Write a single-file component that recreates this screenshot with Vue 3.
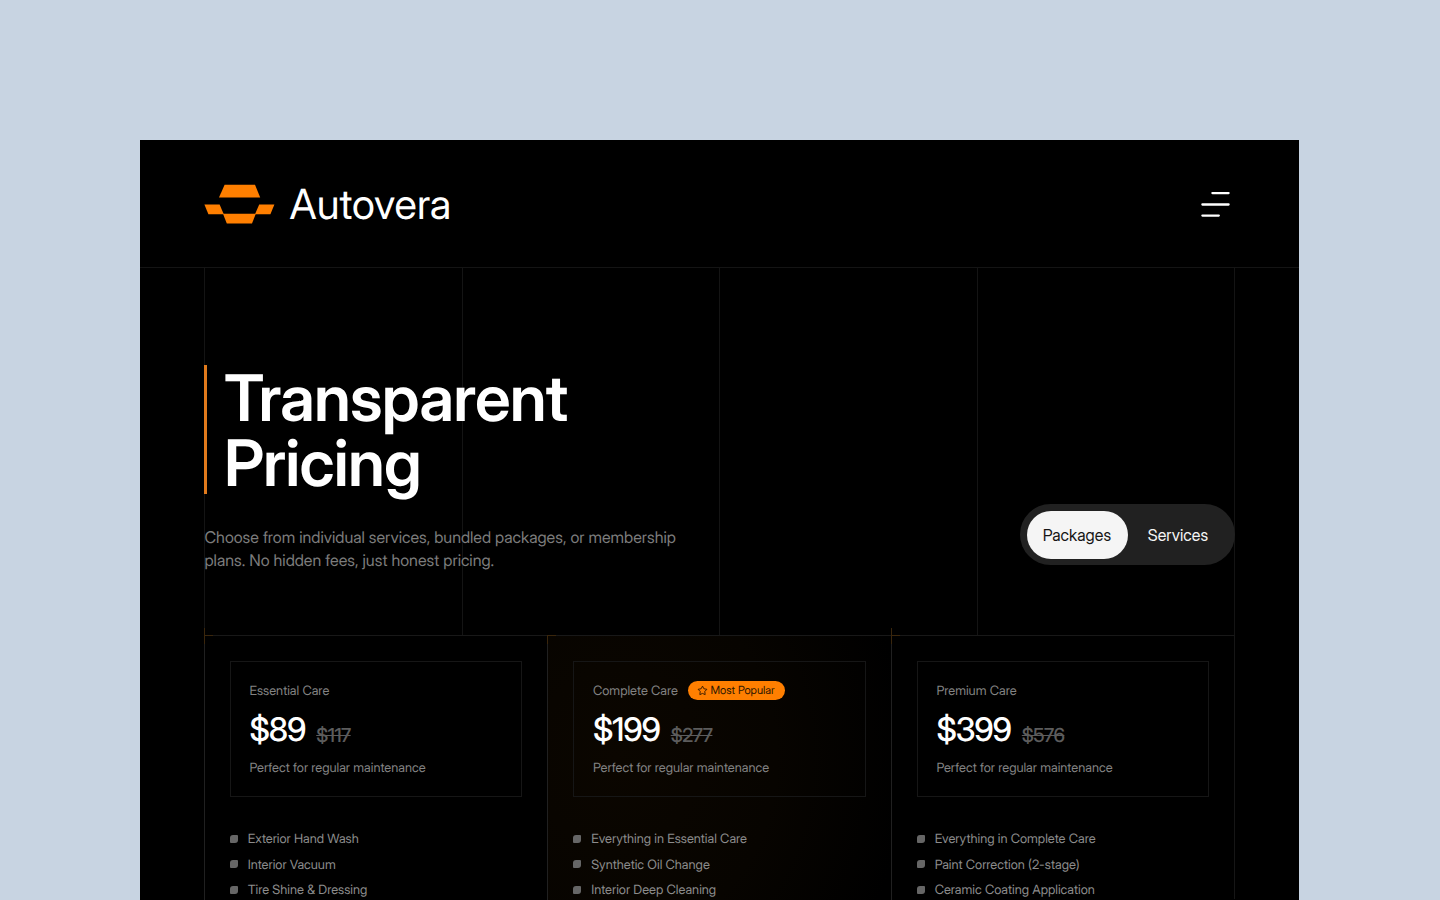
<template>
    <div class="stage">
        <main class="page">
            <header class="header">
                <a class="brand">
                    <svg class="brand__mark" viewBox="0 0 71 40" fill="#ff7f00">
                        <path d="M20.6 0.7H51L56.2 13.5H15Z" />
                        <path d="M0.4 20.4H15.6L19.8 30.2H4.4Z" />
                        <path d="M55.2 20.4H70.4L66.4 30.2H51Z" />
                        <path d="M19 29.8H51.8L48 39.6H22.8Z" />
                    </svg>
                    <span class="brand__name">Autovera</span>
                </a>
                <button class="burger" aria-label="Menu">
                    <svg viewBox="0 0 29 26" fill="none" stroke="#fff" stroke-width="2.3" stroke-linecap="round">
                        <path d="M11.4 2.1H27.6M1.4 13.5H27.6M1.4 24.6H17.8" />
                    </svg>
                </button>
            </header>

            <section class="hero">
                <div class="hero__grid">
                    <i v-for="n in 4" :key="n"></i>
                </div>
                <div class="hero__content">
                    <div>
                        <h1 class="hero__title">Transparent<br />Pricing</h1>
                        <p class="hero__text">
                            Choose from individual services, bundled packages, or membership<br />
                            plans. No hidden fees, just honest pricing.
                        </p>
                    </div>
                    <div class="toggle">
                        <button
                            v-for="tab in tabs"
                            :key="tab"
                            :class="['toggle__item', { 'toggle__item--active': tab === active }]"
                            @click="active = tab"
                        >
                            {{ tab }}
                        </button>
                    </div>
                </div>
            </section>

            <section class="plans">
                <article v-for="plan in plans" :key="plan.name" :class="['plan', { 'plan--popular': plan.popular }]">
                    <div class="plan__box">
                        <div class="plan__head">
                            <span class="plan__name">{{ plan.name }}</span>
                            <span v-if="plan.popular" class="badge">
                                <svg viewBox="0 0 12 12" fill="none" stroke="currentColor" stroke-linejoin="round">
                                    <path d="M6 1.2L7.5 4.1L10.8 4.7L8.5 7.1L8.9 10.5L6 9.2L3.1 10.5L3.5 7.1L1.2 4.7L4.5 4.1Z" />
                                </svg>
                                <span>Most Popular</span>
                            </span>
                        </div>
                        <div class="plan__price">
                            <strong>{{ plan.price }}</strong>
                            <s>{{ plan.old }}</s>
                        </div>
                        <p class="plan__note">Perfect for regular maintenance</p>
                    </div>
                    <ul class="plan__list">
                        <li v-for="item in plan.items" :key="item">{{ item }}</li>
                    </ul>
                </article>
            </section>
        </main>
    </div>
</template>

<script setup>
import { ref } from 'vue'

const tabs = ['Packages', 'Services']
const active = ref('Packages')

const plans = [
    {
        name: 'Essential Care',
        price: '$89',
        old: '$117',
        items: ['Exterior Hand Wash', 'Interior Vacuum', 'Tire Shine & Dressing']
    },
    {
        name: 'Complete Care',
        price: '$199',
        old: '$277',
        popular: true,
        items: ['Everything in Essential Care', 'Synthetic Oil Change', 'Interior Deep Cleaning']
    },
    {
        name: 'Premium Care',
        price: '$399',
        old: '$576',
        items: ['Everything in Complete Care', 'Paint Correction (2-stage)', 'Ceramic Coating Application']
    }
]
</script>

<style>
body {
    margin: 0;
    background: #c8d4e2;
}
</style>

<style scoped>
.stage {
    box-sizing: border-box;
    height: 900px;
    padding: 140px 140.6px 0 140px;
    overflow: hidden;
    background: #c8d4e2;
    font-family: "Inter Display", Inter, "Liberation Sans", sans-serif;
    font-variation-settings: "opsz" 32;
    text-rendering: geometricPrecision;
}

.page {
    height: 760px;
    background: #000;
    color: #fff;
}

button {
    padding: 0;
    border: 0;
    background: none;
    font: inherit;
    font-variation-settings: inherit;
}

.header {
    box-sizing: border-box;
    display: flex;
    align-items: center;
    justify-content: space-between;
    height: 128px;
    padding: 0 69px 0 64px;
    border-bottom: 1px solid #141414;
}

.brand {
    display: flex;
    align-items: center;
    gap: 14.5px;
}

.brand__mark {
    width: 71px;
    height: 40px;
}

.brand__name {
    padding-top: 2px;
    font-size: 41.5px;
    font-weight: 400;
    line-height: 50px;
    letter-spacing: 0.002em;
}

.burger {
    display: flex;
    width: 29px;
    padding-top: 1px;
}

.burger svg {
    width: 29px;
    height: 26px;
}

/* guide lines and content share one grid cell */
.hero {
    display: grid;
    height: 367px;
    margin: 0 64px;
}

.hero__grid,
.hero__content {
    grid-area: 1 / 1;
}

.hero__grid {
    display: grid;
    grid-template-columns: repeat(4, 1fr);
    border-right: 1px solid #141414;
}

.hero__grid i {
    border-left: 1px solid #141414;
}

.hero__content {
    display: flex;
    align-items: flex-end;
    justify-content: space-between;
    padding-bottom: 63.2px;
}

.hero__title {
    box-sizing: border-box;
    height: 128.8px;
    margin: 0;
    padding: 1px 0 0 17px;
    border-left: 3px solid #e07a1c;
    font-size: 64.4px;
    font-weight: 600;
    line-height: 64.4px;
    letter-spacing: -0.0125em;
}

.hero__text {
    margin: 32px 0 0;
    padding-left: 0.5px;
    color: #7c7c7c;
    font-size: 16.1px;
    line-height: 22.8px;
    white-space: nowrap;
}

.toggle {
    box-sizing: border-box;
    display: flex;
    height: 61px;
    margin-bottom: 6.8px;
    padding: 6.5px;
    border-radius: 31px;
    background: #212121;
}

.toggle__item {
    width: 101px;
    padding-right: 1px;
    border-radius: 24px;
    color: #f5f5f5;
    font-size: 16.1px;
    letter-spacing: 0.002em;
}

.toggle__item--active {
    background: #f5f5f5;
    color: #161616;
}

.plans {
    display: grid;
    grid-template-columns: repeat(3, 1fr);
    height: 264px;
    margin: 0 64px;
    border-right: 1px solid #161616;
}

.plan {
    position: relative;
    padding: 25px 25px 0;
    border-top: 1px solid #181818;
    border-left: 1px solid #202020;
}

.plan--popular {
    background: radial-gradient(ellipse 290px 330px at 20% 45%, #0b0600, #070400 55%, #000);
}

/* orange crosshair in the corner */
.plan::before,
.plan::after {
    content: "";
    position: absolute;
    top: -8px;
    left: -1px;
    width: 1px;
    height: 16px;
    background: #3a260c;
}

.plan::after {
    top: -1px;
    width: 9px;
    height: 1px;
}

.plan--popular::before {
    top: 0;
    height: 8px;
}

.plan__box {
    box-sizing: border-box;
    height: 136px;
    padding: 18px 18.5px 0;
    border: 1px solid #161616;
}

.plan__head {
    display: flex;
    align-items: center;
    gap: 10px;
    height: 20px;
    color: #838383;
    font-size: 12.9px;
}

.plan__name {
    padding-top: 2px;
}

.badge {
    display: flex;
    align-items: center;
    gap: 2.5px;
    box-sizing: border-box;
    height: 19px;
    padding: 0 10px 0 9px;
    border-radius: 10px;
    background: #ff7f00;
    color: #301800;
    font-size: 11.2px;
}

.badge svg {
    width: 11px;
    height: 11px;
}

.plan__price {
    display: flex;
    align-items: flex-end;
    gap: 11px;
    height: 39px;
    margin-top: 10px;
}

.plan__price strong {
    font-size: 32.6px;
    font-weight: 480;
    line-height: 39px;
    letter-spacing: -0.035em;
}

.plan__price s {
    color: #5c5c5c;
    font-size: 19.3px;
    font-weight: 450;
    line-height: 27px;
    letter-spacing: -0.028em;
}

.plan__note {
    margin: 11px 0 0;
    color: #838383;
    font-size: 12.9px;
    line-height: 18px;
}

.plan__list {
    margin: 34px 0 0;
    padding: 0;
    list-style: none;
    color: #8c8c8c;
    font-size: 12.9px;
    line-height: 18px;
}

.plan__list li {
    display: flex;
    align-items: center;
    gap: 9.7px;
    height: 18px;
    margin-bottom: 7.7px;
    white-space: nowrap;
}

.plan__list li::before {
    content: "";
    width: 8px;
    height: 8px;
    margin-bottom: 3px;
    border-radius: 3px 1px 3px 1px;
    background: #666;
}
</style>
